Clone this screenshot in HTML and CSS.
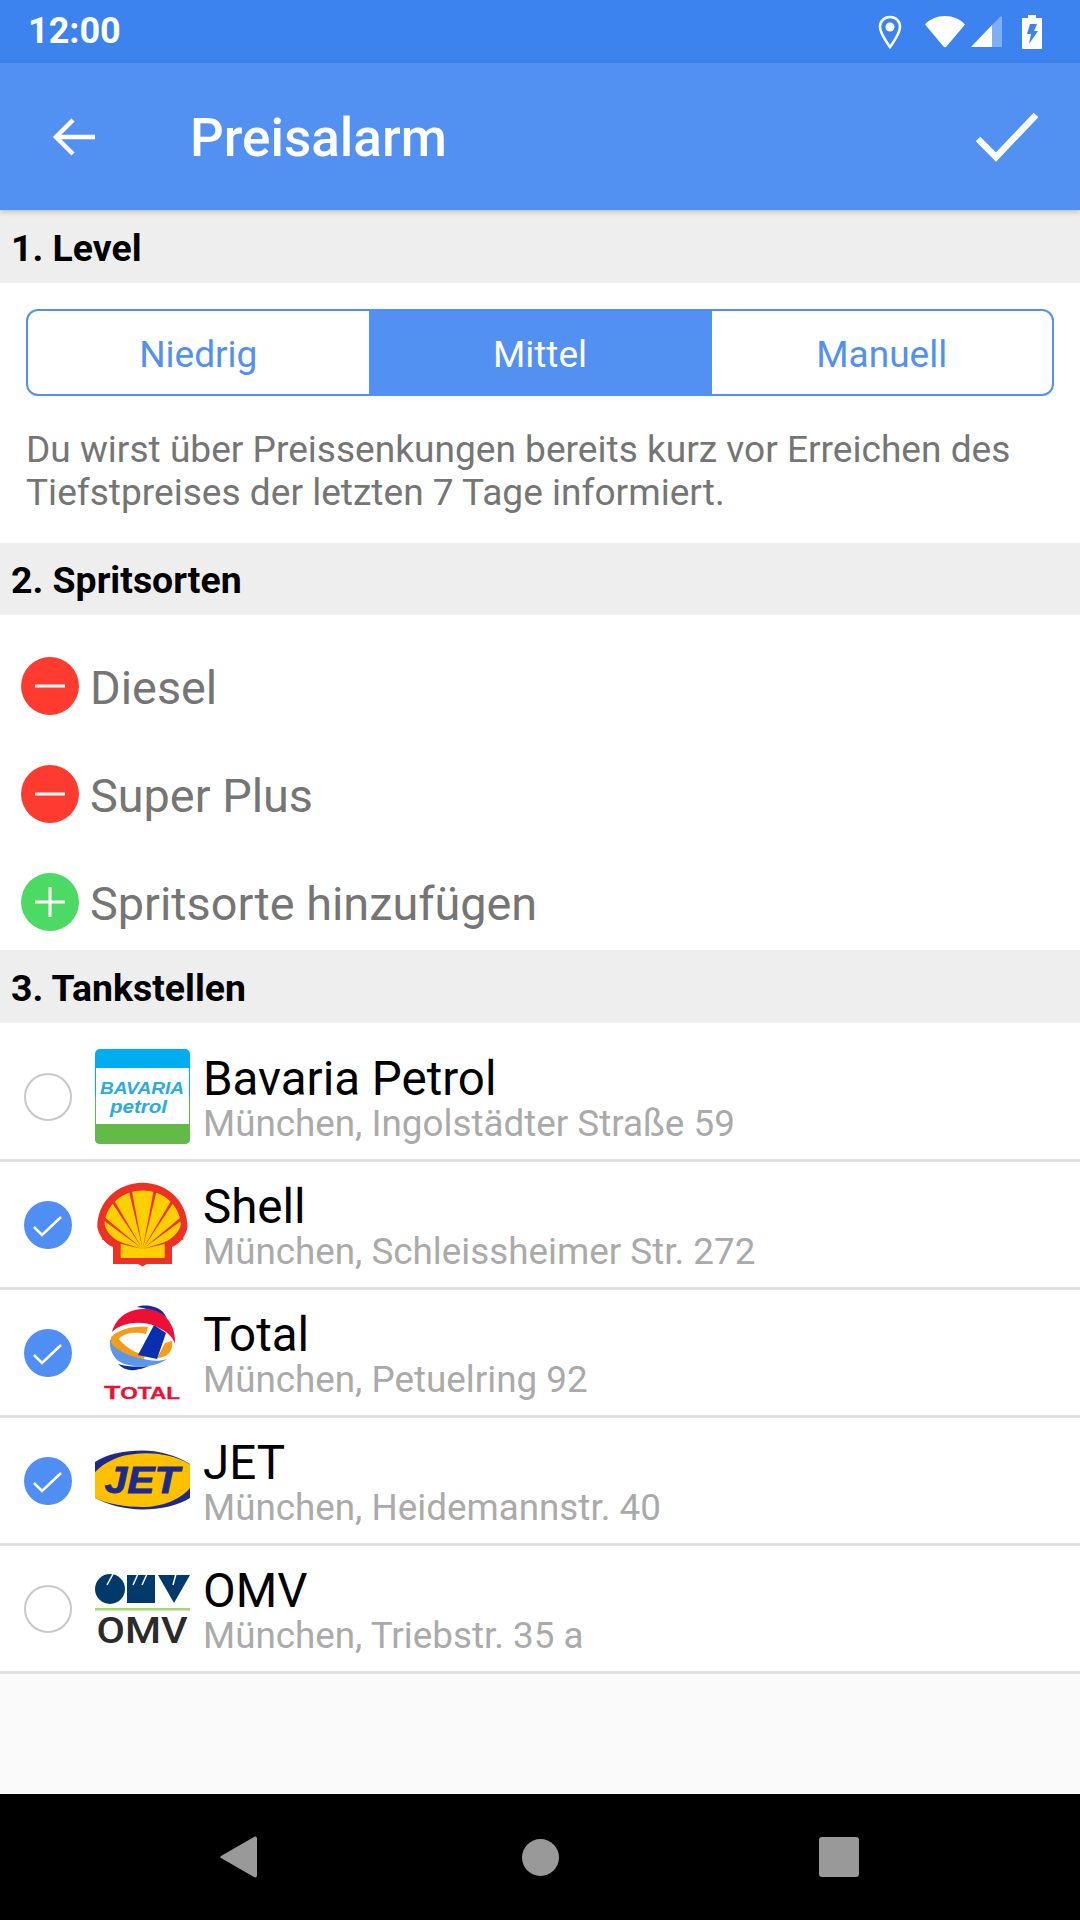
FILE: index.html
```html
<!DOCTYPE html>
<html lang="de">

<head>
    <meta charset="UTF-8">
    <meta name="viewport" content="width=device-width, initial-scale=1.0">
    <title>Preisalarm</title>
    <link rel="stylesheet" href="styles.css">
</head>

<body>
    <div class="screen">
        <div class="status-bar">
            <span class="clock">12:00</span>
            <div class="status-icons">
                <svg class="ic-pin" width="24" height="34" viewBox="0 0 24 34">
                    <path d="M12 2C6 2 2 6.500 2 12c0 6.500 6 14 10 20 4-6 10-13.500 10-20C22 6.500 18 2 12 2z" fill="none" stroke="#fff" stroke-width="2.600"/>
                    <circle cx="12" cy="12" r="4.500" fill="#fff"/>
                </svg>
                <svg class="ic-wifi" width="42" height="33" viewBox="0 0 42 33">
                    <path d="M1 9.500C6 4 13 1 21 1s15 3 20 8.500L22.500 31.500c-.8 1-2.200 1-3 0z" fill="#fff"/>
                </svg>
                <svg class="ic-signal" width="33" height="33" viewBox="0 0 33 33">
                    <path d="M1 32 22 10v22z" fill="#fff"/>
                    <path d="M22 10 30 2c1-.8 2-.4 2 1v29H22z" fill="#fff" opacity=".35"/>
                </svg>
                <svg class="ic-battery" width="20" height="34" viewBox="0 0 20 34">
                    <path d="M6 0h8v3h5c.6 0 1 .4 1 1v29c0 .6-.4 1-1 1H1c-.6 0-1-.4-1-1V4c0-.6.400-1 1-1h5z" fill="#fff"/>
                    <path d="M8 9h7l-3 7h4L7 29l2-10H5z" fill="#3d83ef"/>
                </svg>
            </div>
        </div>

        <header class="app-bar">
            <svg class="back" width="44" height="40" viewBox="0 0 44 40">
                <path d="M43 20H5M21 3 4 20l17 17" fill="none" stroke="#fff" stroke-width="4.500"/>
            </svg>
            <h1>Preisalarm</h1>
            <svg class="done" width="64" height="50" viewBox="0 0 64 50">
                <path d="M3 27 21 45 61 3" fill="none" stroke="#fff" stroke-width="6.500"/>
            </svg>
        </header>

        <h2 class="section tall">1. Level</h2>
        <div class="level">
            <div class="segments">
                <span>Niedrig</span>
                <span class="active">Mittel</span>
                <span>Manuell</span>
            </div>
            <p>Du wirst über Preissenkungen bereits kurz vor Erreichen des Tiefstpreises der letzten 7 Tage informiert.</p>
        </div>

        <h2 class="section">2. Spritsorten</h2>
        <div class="fuels">
            <div class="fuel">
                <svg width="58" height="58" viewBox="0 0 58 58"><circle cx="29" cy="29" r="29" fill="#ff3b30"/><path d="M14 29h30" stroke="#fff" stroke-width="3"/></svg>
                <span>Diesel</span>
            </div>
            <div class="fuel">
                <svg width="58" height="58" viewBox="0 0 58 58"><circle cx="29" cy="29" r="29" fill="#ff3b30"/><path d="M14 29h30" stroke="#fff" stroke-width="3"/></svg>
                <span>Super Plus</span>
            </div>
            <div class="fuel">
                <svg width="58" height="58" viewBox="0 0 58 58"><circle cx="29" cy="29" r="29" fill="#4cd964"/><path d="M14 29h30M29 14v30" stroke="#fff" stroke-width="3"/></svg>
                <span>Spritsorte hinzufügen</span>
            </div>
        </div>

        <h2 class="section tall">3. Tankstellen</h2>
        <div class="stations">
            <div class="station top">
                <span class="radio"></span>
                <svg class="logo" width="95" height="95" viewBox="0 0 95 95">
                    <rect width="95" height="95" rx="5" fill="#00aeef"/>
                    <path d="M0 48h95v42a5 5 0 0 1-5 5H5a5 5 0 0 1-5-5z" fill="#62bb46"/>
                    <rect x="1" y="19" width="93" height="56" fill="#fff"/>
                    <text class="bav" x="47" y="45" text-anchor="middle" textLength="84" lengthAdjust="spacingAndGlyphs">BAVARIA</text>
                    <text class="pet" x="43.500" y="64" text-anchor="middle" textLength="57" lengthAdjust="spacingAndGlyphs">petrol</text>
                </svg>
                <div class="info">
                    <div class="name">Bavaria Petrol</div>
                    <div class="addr">München, Ingolstädter Straße 59</div>
                </div>
            </div>
            <div class="station">
                <span class="radio on"><svg width="48" height="48" viewBox="0 0 48 48"><path d="M10 26l8 8 19-18" fill="none" stroke="#fff" stroke-width="2.600"/></svg></span>
                <svg class="logo" width="95" height="95" viewBox="0 0 95 95">
                    <path d="M18 87V70C12 68 4 60 2.300 50 2.300 25 22 5.700 47.500 5.700S92.500 25 92.500 50C91 60 83 68 77 70V87H52L47.500 89.500 43 87z" fill="#ed3124"/>
                    <path d="M25.700 81V65C18 62 11 55 9.500 47 11 28 27 13.500 47.700 13.500S84.500 28 85.900 47C84.500 55 77 62 69.700 65V81z" fill="#ffd000"/>
                    <path d="M47.700 72 61.700 13.600 58.700 13zM47.700 72 79.200 24.500 76.600 22.900zM47.700 72 88 42.400 86.200 40zM47.700 72 88.700 62.500 87.900 59.500zM47.700 72 33.700 13.600 36.700 13zM47.700 72 16.200 24.500 18.800 22.900zM47.700 72 7.400 42.400 9.200 40zM47.700 72 6.700 62.500 7.500 59.500z" fill="#ed3124"/>
                </svg>
                <div class="info">
                    <div class="name">Shell</div>
                    <div class="addr">München, Schleissheimer Str. 272</div>
                </div>
            </div>
            <div class="station">
                <span class="radio on"><svg width="48" height="48" viewBox="0 0 48 48"><path d="M10 26l8 8 19-18" fill="none" stroke="#fff" stroke-width="2.600"/></svg></span>
                <svg class="logo" width="95" height="95" viewBox="0 0 95 95">
                    <path d="M42 2C50-1 62 1 68 7L72 13C64 7 54 4 42 2z" fill="#0a2fae"/>
                    <path d="M23 59C28 64 34 66 40 65 45 64 50 63 54 61 44 62 32 62 23 59z" fill="#0a2fae"/>
                    <path d="M15 34C14 44 18 54 27 58 36 62 58 64 72 54 64 57 54 56 46 53 34 50 22 44 15 34z" fill="#5b96e8"/>
                    <path d="M16 32C24 24 38 21 53 22L51 29C42 27 30 27 24 34 30 42 40 48 50 50L49 54C36 52 22 46 16 38z" fill="#f59c1a"/>
                    <path d="M70 38 77 36C78 42 76 47 72 50 69 52 65 53 62 53z" fill="#f59c1a"/>
                    <path d="M59 20 71 28 62 54 43 50z" fill="#0a2fae"/>
                    <path d="M17 27C22 9 38 3 52 4 68 5 81 18 80 39 78 32 72 26 60 21 48 16 28 16 17 27z" fill="#ef0f34"/>
                    <text class="total" x="47" y="94" text-anchor="middle" textLength="76" lengthAdjust="spacingAndGlyphs"><tspan class="total-big">T</tspan>OTAL</text>
                </svg>
                <div class="info">
                    <div class="name">Total</div>
                    <div class="addr">München, Petuelring 92</div>
                </div>
            </div>
            <div class="station">
                <span class="radio on"><svg width="48" height="48" viewBox="0 0 48 48"><path d="M10 26l8 8 19-18" fill="none" stroke="#fff" stroke-width="2.600"/></svg></span>
                <svg class="logo" width="95" height="95" viewBox="0 0 95 95">
                    <path d="M0 29C12 21 30 17.500 47 17.500 64 17.500 80 22 95 31V65C84 72 66 76.500 47 76.500 30 76.500 12 71.500 0 65z" fill="#1c2a8c"/>
                    <path d="M0 39C10 29 24 22 40 21 56 19 78 21 95 31.500V55C86 66 68 74 47 74 32 74 12 71 0 65z" fill="#ffc000"/>
                    <text class="jet" x="47" y="60" text-anchor="middle" textLength="75" lengthAdjust="spacingAndGlyphs">JET</text>
                </svg>
                <div class="info">
                    <div class="name">JET</div>
                    <div class="addr">München, Heidemannstr. 40</div>
                </div>
            </div>
            <div class="station">
                <span class="radio"></span>
                <svg class="logo" width="95" height="95" viewBox="0 0 95 95">
                    <circle cx="15" cy="28" r="15" fill="#003a6b"/>
                    <path d="M32 14h28v28H32z" fill="#003a6b"/>
                    <path d="M63 14h32L79 42z" fill="#003a6b"/>
                    <path d="M18 13l-6 11M43 13l-5 11M52 13l-5 11M81 13l-3 11" stroke="#fff" stroke-width="1.500"/>
                    <rect y="47" width="95" height="2.500" fill="#a5d86e"/>
                    <text class="omv" x="47" y="82" text-anchor="middle" textLength="91" lengthAdjust="spacingAndGlyphs">OMV</text>
                </svg>
                <div class="info">
                    <div class="name">OMV</div>
                    <div class="addr">München, Triebstr. 35 a</div>
                </div>
            </div>
        </div>
        <div class="spacer"></div>

        <nav class="nav-bar">
            <svg width="38" height="42" viewBox="0 0 38 42"><path d="M1 20 34 1c2-1 3 0 3 2v36c0 2-1 3-3 2L1 22c-1-.5-1-1.500 0-2z" fill="#999"/></svg>
            <svg width="37" height="37" viewBox="0 0 37 37"><circle cx="18.500" cy="18.500" r="18.500" fill="#999"/></svg>
            <svg width="40" height="40" viewBox="0 0 40 40"><rect width="40" height="40" rx="3" fill="#999"/></svg>
        </nav>
    </div>
</body>

</html>
```

FILE: styles.css
```css
* {
    box-sizing: border-box;
}

body {
    margin: 0;
    font-family: Roboto, "Liberation Sans", sans-serif;
    background-color: #fafafa;
}

.screen {
    width: 1080px;
    height: 1920px;
    display: flex;
    flex-direction: column;
    overflow: hidden;
}

/* status bar */
.status-bar {
    height: 63px;
    flex: none;
    background-color: #3d83ef;
    display: flex;
    align-items: center;
    justify-content: space-between;
    padding: 0 38px 0 28px;
    color: #fff;
}

.clock {
    font-size: 36px;
    font-weight: 700;
    margin-top: -2px;
}

.status-icons {
    display: flex;
    align-items: center;
    gap: 6px;
}

.ic-pin {
    margin-right: 16px;
}

.ic-signal {
    margin-left: -2px;
}

.ic-battery {
    margin-left: 13px;
}

/* toolbar */
.app-bar {
    height: 147px;
    flex: none;
    background-color: #5291f1;
    display: flex;
    align-items: center;
    padding: 0 21px 0 52px;
    position: relative;
    z-index: 1;
    box-shadow: 0 2px 5px rgba(0, 0, 0, 0.2);
}

.app-bar h1 {
    margin: 3px 0 0 94px;
    font-size: 53px;
    font-weight: 500;
    color: #fff;
    flex: 1;
}

.done {
    margin-right: 20px;
}

/* section headers */
.section {
    height: 72px;
    flex: none;
    margin: 0;
    padding: 2px 0 0 11px;
    display: flex;
    align-items: center;
    background-color: #eeeeee;
    font-size: 37.400px;
    font-weight: 700;
    color: #000;
}

.section.tall {
    height: 73px;
    padding-top: 3px;
}

/* level selection */
.level {
    height: 260px;
    flex: none;
    background-color: #fff;
    padding: 26px 26px 0;
}

.segments {
    display: flex;
    height: 87px;
    border: 2px solid #5291f1;
    border-radius: 12px;
    overflow: hidden;
}

.segments span {
    flex: 1;
    display: flex;
    align-items: center;
    justify-content: center;
    padding-top: 4px;
    font-size: 37px;
    color: #5291f1;
}

.segments .active {
    flex: 0 0 343px;
    background-color: #5291f1;
    color: #fff;
}

.level p {
    margin: 32px 0 0;
    font-size: 37.100px;
    line-height: 43px;
    color: #757575;
}

/* fuels */
.fuels {
    height: 335px;
    flex: none;
    background-color: #fff;
    padding-top: 17px;
}

.fuel {
    height: 108px;
    display: flex;
    align-items: center;
    padding-left: 21px;
    gap: 11px;
    font-size: 46.800px;
    color: #757575;
}

.fuel span {
    padding-top: 4px;
}

/* stations */
.stations {
    flex: none;
    background-color: #fff;
}

.station {
    height: 128px;
    display: flex;
    align-items: center;
    padding-left: 24px;
    border-bottom: 3px solid #e0e0e0;
}

.station.top {
    height: 139px;
    padding-top: 11px;
}

.radio {
    width: 48px;
    height: 48px;
    flex: none;
    border-radius: 50%;
    border: 2px solid #c8c7cc;
    margin-right: 23px;
}

.radio.on {
    border: none;
    background-color: #4f8ef3;
}

.radio svg {
    display: block;
}

.logo {
    flex: none;
    overflow: visible;
}

.info {
    margin: 4px 0 0 13px;
}

.name {
    font-size: 47.500px;
    line-height: 51px;
    color: #000;
}

.addr {
    font-size: 36.800px;
    line-height: 38px;
    color: #aaaaaa;
}

/* logo lettering */
.bav {
    font: italic 700 16.500px "Liberation Sans", sans-serif;
    fill: #29abe2;
}

.pet {
    font: italic 700 17.500px "Liberation Sans", sans-serif;
    fill: #29abe2;
}

.total {
    font: 700 16px "Liberation Sans", sans-serif;
    fill: #ef0f34;
    stroke: #ef0f34;
    stroke-width: 0.300px;
}

.total-big {
    font-size: 19px;
}

.jet {
    font: italic 700 37px "Liberation Sans", sans-serif;
    fill: #1c2a8c;
    stroke: #1c2a8c;
    stroke-width: 0.800px;
}

.omv {
    font: 500 36px Roboto, sans-serif;
    fill: #2b2b2b;
}

.spacer {
    flex: 1;
    background-color: #fafafa;
}

/* android navigation */
.nav-bar {
    height: 126px;
    flex: none;
    background-color: #000;
    display: flex;
    align-items: center;
    justify-content: center;
    padding-right: 2px;
}

.nav-bar svg:nth-child(1) {
    margin-right: 264px;
}

.nav-bar svg:nth-child(3) {
    margin-left: 260px;
}
```
